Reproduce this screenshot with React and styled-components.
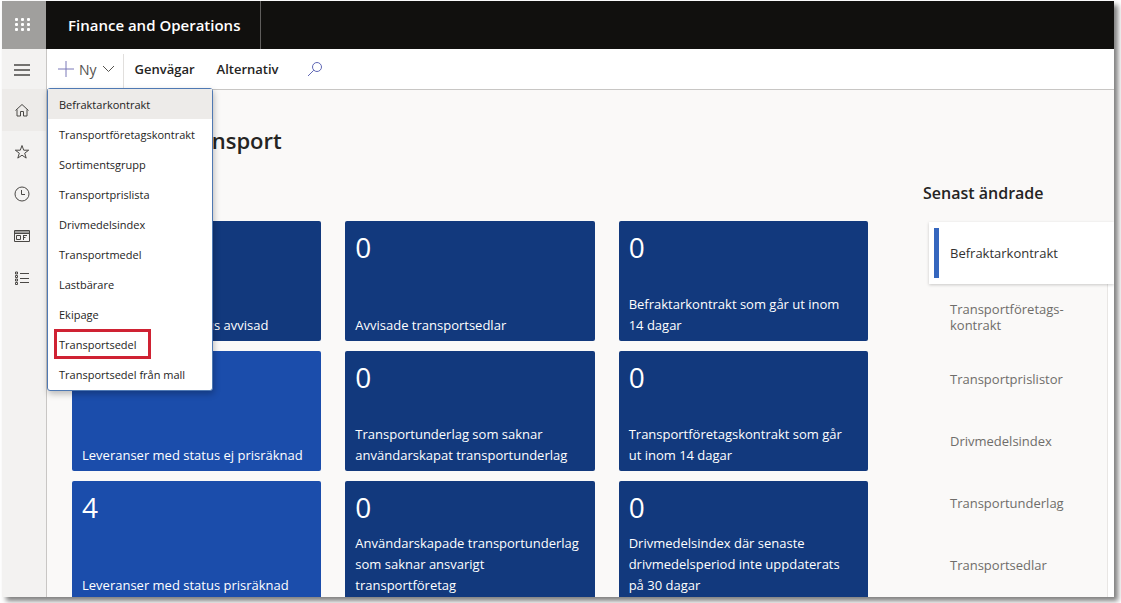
import React from 'react';
import styled, { createGlobalStyle } from 'styled-components';

const GlobalStyle = createGlobalStyle`
    * {
        box-sizing: border-box;
    }

    body {
        margin: 0;
        background: #ffffff;
        color: #252423;
        font-family: 'Open Sans', 'Noto Sans', sans-serif;
        font-size: 13px;
    }

    button {
        border: 0;
        margin: 0;
        padding: 0;
        background: none;
        color: inherit;
        font: inherit;
        text-align: left;
        cursor: pointer;
    }

    a {
        color: inherit;
        text-decoration: none;
    }

    ul {
        list-style: none;
        margin: 0;
        padding: 0;
    }
`;

const Page = styled.div`
    height: 100vh;
    padding: 1px 7px 6px 2px;
    overflow: hidden;
`;

const Window = styled.div`
    display: flex;
    flex-direction: column;
    height: 100%;
    background: #faf9f8;
    box-shadow: 4px 4px 5px rgba(0, 0, 0, 0.5);
`;

const TopBar = styled.header`
    display: flex;
    flex: 0 0 48px;
    background: #11100e;
    color: #ffffff;
`;

const AppLauncher = styled.button`
    display: flex;
    align-items: center;
    justify-content: center;
    width: 44px;
    padding-right: 4px;
    background: #a09f9d;
`;

const Brand = styled.a`
    display: flex;
    align-items: center;
    padding: 0 20px 0 22px;
    border-right: 1px solid #605e5c;
    font-size: 15px;
    font-weight: 600;
`;

const Body = styled.div`
    display: flex;
    flex: 1;
    min-height: 0;
`;

const SideNav = styled.nav`
    flex: 0 0 45px;
    background: #f3f2f1;
    border-right: 1px solid #c8c6c4;
`;

const NavButton = styled.button`
    display: flex;
    align-items: center;
    justify-content: center;
    width: 100%;
    height: ${(props) => (props.$menu ? 40 : 42)}px;
    padding-right: 4px;
    background: ${(props) => (props.$active ? '#edebe9' : 'transparent')};
    color: #4a4845;
`;

const Main = styled.main`
    display: flex;
    flex: 1;
    flex-direction: column;
    min-width: 0;
`;

const ActionBar = styled.div`
    display: flex;
    align-items: center;
    flex: 0 0 41px;
    padding-left: 11px;
    background: #ffffff;
    border-bottom: 1px solid #c8c6c4;
`;

const NewWrap = styled.div`
    position: relative;
    display: flex;
    align-items: center;
    align-self: stretch;
    padding-right: 8px;
`;

const NewButton = styled.button`
    display: flex;
    align-items: center;
    gap: 5px;
    color: #55534f;
    font-size: 14px;
`;

const Divider = styled.span`
    align-self: stretch;
    width: 1px;
    margin: 5px 11px 0 0;
    background: #e1dfdd;
`;

const ActionButton = styled.button`
    margin-right: 22px;
    font-weight: 600;
`;

const SearchButton = styled.button`
    display: flex;
    margin-left: 6px;
`;

const Menu = styled.ul`
    position: absolute;
    top: 39px;
    left: -11px;
    z-index: 2;
    width: 166px;
    padding-bottom: 1px;
    background: #ffffff;
    border: 1px solid #4f79b3;
    border-radius: 3px;
    box-shadow: 1px 3px 6px rgba(0, 0, 0, 0.25);
    font-size: 11px;
`;

const MenuItem = styled.li`
    position: relative;
    background: ${(props) => (props.$active ? '#edebe9' : 'transparent')};

    button {
        width: 100%;
        height: 30px;
        padding-left: 11px;
        white-space: nowrap;
    }
`;

const Highlight = styled.span`
    position: absolute;
    inset: 0 auto 0 6px;
    width: 97px;
    border: 3px solid #cf2233;
    pointer-events: none;
`;

const Content = styled.div`
    display: flex;
    flex: 1;
    min-height: 0;
    overflow: hidden;
    gap: 55px;
`;

const Workspace = styled.section`
    flex: 1;
    min-width: 0;
    padding: 35px 0 0 25px;
`;

const Title = styled.h1`
    margin: 0 0 65px;
    font-size: 22px;
    font-weight: 600;
    line-height: 31px;
    white-space: nowrap;
`;

const Tiles = styled.div`
    display: grid;
    grid-template-columns: repeat(3, 1fr);
    grid-auto-rows: 120px;
    gap: 10px 24px;
`;

const Tile = styled.button`
    display: flex;
    flex-direction: column;
    justify-content: space-between;
    padding: 6px 14px 5px 10px;
    background: ${(props) => (props.$light ? '#1b4dab' : '#12397d')};
    border-radius: 2px;
    color: #ffffff;
    line-height: 21px;
`;

const Count = styled.span`
    font-size: 28px;
    line-height: 40px;
`;

const Recent = styled.aside`
    display: flex;
    flex-direction: column;
    flex: 0 0 191px;
    padding-top: 91px;
`;

const RecentTitle = styled.h2`
    margin: 0 0 17px;
    font-size: 16px;
    font-weight: 600;
    line-height: 24px;
`;

const RecentList = styled.ul`
    flex: 1;
    margin-left: 6px;
    background: linear-gradient(to left, #ffffff 6px, #e8e6e4 6px, #e8e6e4 7px, transparent 7px);
`;

const RecentItem = styled.li`
    display: flex;
    align-items: center;
    height: 62px;
    padding: 0 8px 0 21px;
    color: #6f6d6a;
    line-height: 16px;
    white-space: pre-line;

    ${(props) =>
        props.$active &&
        `
        margin-bottom: 2px;
        padding-left: 5px;
        background: #ffffff;
        box-shadow: 0 1px 3px rgba(0, 0, 0, 0.2);
        color: #323130;

        &::before {
            content: '';
            width: 5px;
            height: 50px;
            margin-right: 11px;
            background: #3566be;
        }
    `}
`;

const Icon = ({ size = 16, color = 'currentColor', children }) => (
    <svg width={size} height={size} viewBox="0 0 16 16" fill="none" stroke={color} aria-hidden="true">
        {children}
    </svg>
);

const navItems = [
    { label: 'Start', active: true, icon: <path d="M1.500 8.500 8 2.500l6.500 6M3 7.500V14h3.500V9.500h3V14H13V7.500" /> },
    { label: 'Favoriter', icon: <path d="M8 1.500 9.700 6.200h5l-4 3 1.500 4.900L8 11.200l-4.200 2.900 1.500-4.900-4-3h5z" /> },
    {
        label: 'Senaste',
        icon: (
            <>
                <circle cx="8" cy="8" r="7" />
                <path d="M7.500 4v4.500H11" />
            </>
        ),
    },
    {
        label: 'Arbetsytor',
        icon: (
            <>
                <path d="M.5 2.500h15v11H.5zM.5 5.500h15M2.500 7.500h4v4h-4zM9 7.500h4M9 9.500h2.500M9.500 7v5" />
                <path d="M.5 4h15" strokeWidth="2" opacity=".5" />
            </>
        ),
    },
    {
        label: 'Moduler',
        icon: <path d="M1.500 2h2v2h-2zM1.500 5.500h2v2h-2zM1.500 9h2v2h-2zM1.500 12.500h2v2h-2zM6 3.500h9M6 8.500h9M6 12.500h9" />,
    },
];

const menuItems = [
    'Befraktarkontrakt',
    'Transportföretagskontrakt',
    'Sortimentsgrupp',
    'Transportprislista',
    'Drivmedelsindex',
    'Transportmedel',
    'Lastbärare',
    'Ekipage',
    'Transportsedel',
    'Transportsedel från mall',
];

const tiles = [
    { count: 0, text: 'Leveranser med status avvisad' },
    { count: 0, text: 'Avvisade transportsedlar' },
    { count: 0, text: 'Befraktarkontrakt som går ut inom 14 dagar' },
    { count: 0, text: 'Leveranser med status ej prisräknad', light: true },
    { count: 0, text: 'Transportunderlag som saknar användarskapat transportunderlag' },
    { count: 0, text: 'Transportföretagskontrakt som går ut inom 14 dagar' },
    { count: 4, text: 'Leveranser med status prisräknad', light: true },
    { count: 0, text: 'Användarskapade transportunderlag som saknar ansvarigt transportföretag' },
    { count: 0, text: 'Drivmedelsindex där senaste drivmedelsperiod inte uppdaterats på 30 dagar' },
];

const recentItems = [
    'Befraktarkontrakt',
    'Transportföretags-\nkontrakt',
    'Transportprislistor',
    'Drivmedelsindex',
    'Transportunderlag',
    'Transportsedlar',
];

const App = () => {
    return (
        <Page>
            <GlobalStyle />
            <Window>
                <TopBar>
                    <AppLauncher aria-label="Appar">
                        <Icon color="none">
                            <g fill="#ffffff">
                                {[1, 6, 11].map((y) =>
                                    [1, 7, 13].map((x) => <rect key={`${x}-${y}`} x={x} y={y} width="3" height="3" rx="1" />)
                                )}
                            </g>
                        </Icon>
                    </AppLauncher>
                    <Brand href="#">Finance and Operations</Brand>
                </TopBar>
                <Body>
                    <SideNav>
                        <NavButton $menu aria-label="Meny">
                            <Icon>
                                <path d="M0 4h16M0 9h16M0 14h16" strokeWidth="1.300" />
                            </Icon>
                        </NavButton>
                        {navItems.map((item) => (
                            <NavButton key={item.label} $active={item.active} aria-label={item.label}>
                                <Icon>{item.icon}</Icon>
                            </NavButton>
                        ))}
                    </SideNav>
                    <Main>
                        <ActionBar>
                            <NewWrap>
                                <NewButton>
                                    <Icon color="#7a78b8">
                                        <path d="M8 0v16M0 8h16" />
                                    </Icon>
                                    Ny
                                    <svg width="13" height="8" viewBox="0 0 13 8" fill="none" stroke="#55534f" aria-hidden="true">
                                        <path d="m1 1 5.500 5.500L12 1" />
                                    </svg>
                                </NewButton>
                                <Menu>
                                    {menuItems.map((label, i) => (
                                        <MenuItem key={label} $active={i === 0}>
                                            <button>{label}</button>
                                            {label === 'Transportsedel' && <Highlight />}
                                        </MenuItem>
                                    ))}
                                </Menu>
                            </NewWrap>
                            <Divider />
                            <ActionButton>Genvägar</ActionButton>
                            <ActionButton>Alternativ</ActionButton>
                            <SearchButton aria-label="Sök">
                                <Icon color="#5f67b5">
                                    <circle cx="10" cy="6" r="4.500" />
                                    <path d="M6.800 9.200 1 15" />
                                </Icon>
                            </SearchButton>
                        </ActionBar>
                        <Content>
                            <Workspace>
                                <Title>Arbetsyta transport</Title>
                                <Tiles>
                                    {tiles.map((tile) => (
                                        <Tile key={tile.text} $light={tile.light}>
                                            <Count>{tile.count}</Count>
                                            <span>{tile.text}</span>
                                        </Tile>
                                    ))}
                                </Tiles>
                            </Workspace>
                            <Recent>
                                <RecentTitle>Senast ändrade</RecentTitle>
                                <RecentList>
                                    {recentItems.map((label, i) => (
                                        <RecentItem key={label} $active={i === 0}>
                                            <a href="#">{label}</a>
                                        </RecentItem>
                                    ))}
                                </RecentList>
                            </Recent>
                        </Content>
                    </Main>
                </Body>
            </Window>
        </Page>
    );
};

export default App;
